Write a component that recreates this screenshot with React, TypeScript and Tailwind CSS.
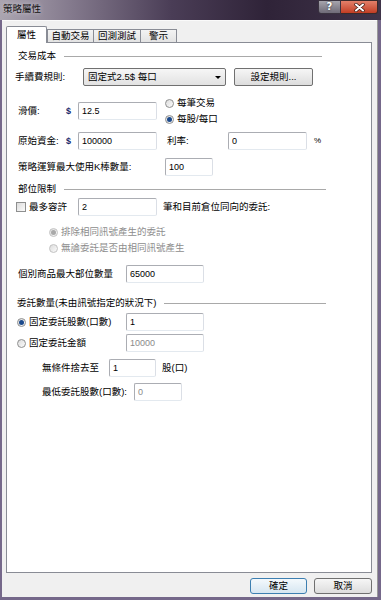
import React from "react";

type BoxProps = { value: string; w: string; muted?: boolean };

const TextBox = ({ value, w, muted }: BoxProps) => (
  <div
    className={`${w} h-[18px] shrink-0 flex items-center pl-[3px] bg-white border border-[#abadb3] border-b-[#e3e9ef] border-r-[#dbdfe6] rounded-[2px] text-[9px] ${
      muted ? "text-[#8a8a8a]" : "text-black"
    }`}
  >
    {value}
  </div>
);

const Radio = ({ checked, disabled }: { checked?: boolean; disabled?: boolean }) => (
  <span
    className={`w-[9px] h-[9px] shrink-0 rounded-full border flex items-center justify-center bg-linear-to-br from-[#dcdcdc] to-[#fbfbfb] ${
      disabled ? "border-[#c2c2c2]" : "border-[#8e8f8f]"
    }`}
  >
    {checked && (
      <span
        className={`w-[5px] h-[5px] rounded-full ${
          disabled ? "bg-[#a9a9a9]" : "bg-[#1c4a8c]"
        }`}
      />
    )}
  </span>
);

const Group = ({ title, box }: { title: string; box: string }) => (
  <div className={`${box} h-[14px] flex items-center`}>
    <span className="whitespace-nowrap">{title}</span>
    <div className="flex-1 h-px bg-[#a9a9a9] ml-[8px]" />
  </div>
);

export default function App() {
  return (
    <div className="w-[381px] h-[600px] flex flex-col bg-[#75688a] overflow-hidden text-[9.5px] leading-none text-black font-['Liberation_Sans','Noto_Sans_CJK_TC',sans-serif]">
      {/* title bar */}
      <div className="h-[20px] shrink-0 flex items-start bg-[linear-gradient(to_right,#aba5b0_0%,#857b8e_18%,#4a3d56_45%,#2f2338_70%,#3f3449_100%)]">
        <span className="ml-[3px] mt-[4px] text-[#111] text-[9.5px] [text-shadow:0_0_4px_#d8d4dc]">
          策略屬性
        </span>
        <div className="ml-auto mr-[3px] flex h-[14px]">
          <div className="w-[23px] h-[14px] rounded-bl-[3px] border border-[#3a3340] bg-linear-to-b from-[#a7a5ad] to-[#6f6b78] flex items-center justify-center text-white font-bold text-[10px] font-['DejaVu_Sans',sans-serif] [text-shadow:0_0_2px_#222]">
            ?
          </div>
          <div className="w-[37px] h-[14px] rounded-br-[3px] border border-l-0 border-[#3a2a2a] bg-linear-to-b from-[#e2806a] to-[#c23c22] flex items-center justify-center">
            <svg width="11" height="9" viewBox="0 0 11 9">
              <path d="M2 1.5 L9 7.5 M9 1.5 L2 7.5" stroke="#3a1a14" strokeWidth="3.4" strokeLinecap="round" />
              <path d="M2 1.5 L9 7.5 M9 1.5 L2 7.5" stroke="#ffffff" strokeWidth="2" strokeLinecap="round" />
            </svg>
          </div>
        </div>
      </div>

      {/* client */}
      <div className="flex-1 flex flex-col ml-[2px] mr-[3px] mb-[3px] bg-[#f0f0f0] border-r border-[#9a9a9a]">
        {/* tabs */}
        <div className="h-[22px] shrink-0 flex items-end pl-[4px] border-t border-[#fafafa]">
          <div className="relative z-10 -mb-px w-[41px] h-[17px] bg-white border border-b-0 border-[#898c95] rounded-t-[2px] flex items-center justify-center">
            屬性
          </div>
          <div className="w-[47px] h-[13px] bg-linear-to-b from-[#f3f3f3] to-[#e3e3e3] border border-b-0 border-[#898c95] flex items-center justify-center">
            自動交易
          </div>
          <div className="-ml-px w-[48px] h-[13px] bg-linear-to-b from-[#f3f3f3] to-[#e3e3e3] border border-b-0 border-[#898c95] flex items-center justify-center">
            回測測試
          </div>
          <div className="-ml-px w-[37px] h-[13px] bg-linear-to-b from-[#f3f3f3] to-[#e3e3e3] border border-b-0 border-[#898c95] flex items-center justify-center">
            警示
          </div>
        </div>

        {/* panel */}
        <div className="flex-1 ml-[4px] mr-[5px] bg-white border border-[#898c95] flex flex-col">
          {/* 交易成本 */}
          <div className="mt-[6px] ml-[11px]">
            <Group title="交易成本" box="w-[304px]" />
          </div>

          <div className="mt-[5px] ml-[8px] h-[18px] flex items-center">
            <span className="w-[68px] shrink-0">手續費規則:</span>
            <div className="w-[143px] h-[18px] shrink-0 flex items-center pl-[4px] pr-[4px] border border-[#707070] rounded-[2px] bg-linear-to-b from-[#f6f6f6] to-[#e2e2e2]">
              <span>固定式2.5$ 每口</span>
              <span className="ml-auto w-0 h-0 border-l-[3px] border-r-[3px] border-t-[3px] border-l-transparent border-r-transparent border-t-black" />
            </div>
            <div className="ml-[8px] w-[79px] h-[18px] shrink-0 flex items-center justify-center border border-[#707070] rounded-[2px] bg-linear-to-b from-[#f6f6f6] to-[#dddddd]">
              設定規則...
            </div>
          </div>

          <div className="mt-[9px] ml-[11px] h-[32px] flex items-center">
            <span className="w-[48px] shrink-0">滑價:</span>
            <span className="w-[12px] shrink-0 text-[#1a2a6a] font-bold text-[9px]">$</span>
            <TextBox value="12.5" w="w-[79px]" />
            <div className="ml-[8px] flex flex-col">
              <div className="h-[16px] flex items-center gap-[3px]">
                <Radio />
                <span>每筆交易</span>
              </div>
              <div className="h-[16px] flex items-center gap-[3px]">
                <Radio checked />
                <span>每股/每口</span>
              </div>
            </div>
          </div>

          <div className="mt-[5px] ml-[11px] h-[18px] flex items-center">
            <span className="w-[48px] shrink-0">原始資金:</span>
            <span className="w-[12px] shrink-0 text-[#1a2a6a] font-bold text-[9px]">$</span>
            <TextBox value="100000" w="w-[79px]" />
            <span className="ml-[10px] w-[61px] shrink-0">利率:</span>
            <TextBox value="0" w="w-[79px]" />
            <span className="ml-[7px] text-[8px]">%</span>
          </div>

          <div className="mt-[8px] ml-[11px] h-[18px] flex items-center">
            <span className="w-[147px] shrink-0">策略運算最大使用K棒數量:</span>
            <TextBox value="100" w="w-[48px]" />
          </div>

          {/* 部位限制 */}
          <div className="mt-[6px] ml-[11px]">
            <Group title="部位限制" box="w-[308px]" />
          </div>

          <div className="mt-[2px] ml-[9px] h-[18px] flex items-center">
            <span className="w-[10px] h-[10px] shrink-0 border border-[#8e8f8f] bg-linear-to-br from-[#dcdcdc] to-[#fbfbfb]" />
            <span className="ml-[3px] w-[49px] shrink-0">最多容許</span>
            <TextBox value="2" w="w-[79px]" />
            <span className="ml-[6px]">筆和目前倉位同向的委託:</span>
          </div>

          <div className="mt-[8px] ml-[42px] h-[16px] flex items-center gap-[3px] text-[#8d8d8d]">
            <Radio checked disabled />
            <span>排除相同訊號產生的委託</span>
          </div>
          <div className="ml-[42px] h-[16px] flex items-center gap-[3px] text-[#8d8d8d]">
            <Radio disabled />
            <span>無論委託是否由相同訊號產生</span>
          </div>

          <div className="mt-[9px] ml-[11px] h-[18px] flex items-center">
            <span className="w-[108px] shrink-0">個別商品最大部位數量</span>
            <TextBox value="65000" w="w-[78px]" />
          </div>

          {/* 委託數量 */}
          <div className="mt-[13px] ml-[10px]">
            <Group title="委託數量(未由訊號指定的狀況下)" box="w-[309px]" />
          </div>

          <div className="mt-[3px] ml-[10px] h-[18px] flex items-center">
            <Radio checked />
            <span className="ml-[3px] w-[97px] shrink-0">固定委託股數(口數)</span>
            <TextBox value="1" w="w-[78px]" />
          </div>

          <div className="mt-[3px] ml-[10px] h-[18px] flex items-center">
            <Radio />
            <span className="ml-[3px] w-[97px] shrink-0">固定委託金額</span>
            <TextBox value="10000" w="w-[78px]" muted />
          </div>

          <div className="mt-[7px] ml-[35px] h-[18px] flex items-center">
            <span className="w-[67px] shrink-0">無條件捨去至</span>
            <TextBox value="1" w="w-[47px]" />
            <span className="ml-[6px]">股(口)</span>
          </div>

          <div className="mt-[6px] ml-[35px] h-[18px] flex items-center">
            <span className="w-[92px] shrink-0">最低委託股數(口數):</span>
            <TextBox value="0" w="w-[48px]" muted />
          </div>
        </div>

        {/* footer */}
        <div className="h-[24px] shrink-0 flex items-start justify-end gap-[7px] pt-[5px] pr-[5px]">
          <div className="w-[57px] h-[16px] flex items-center justify-center rounded-[3px] border border-[#3c7fb1] bg-linear-to-b from-[#f4f9fc] to-[#d6e6f1]">
            確定
          </div>
          <div className="w-[58px] h-[16px] flex items-center justify-center rounded-[3px] border border-[#707070] bg-linear-to-b from-[#f6f6f6] to-[#dddddd]">
            取消
          </div>
        </div>
      </div>
    </div>
  );
}
